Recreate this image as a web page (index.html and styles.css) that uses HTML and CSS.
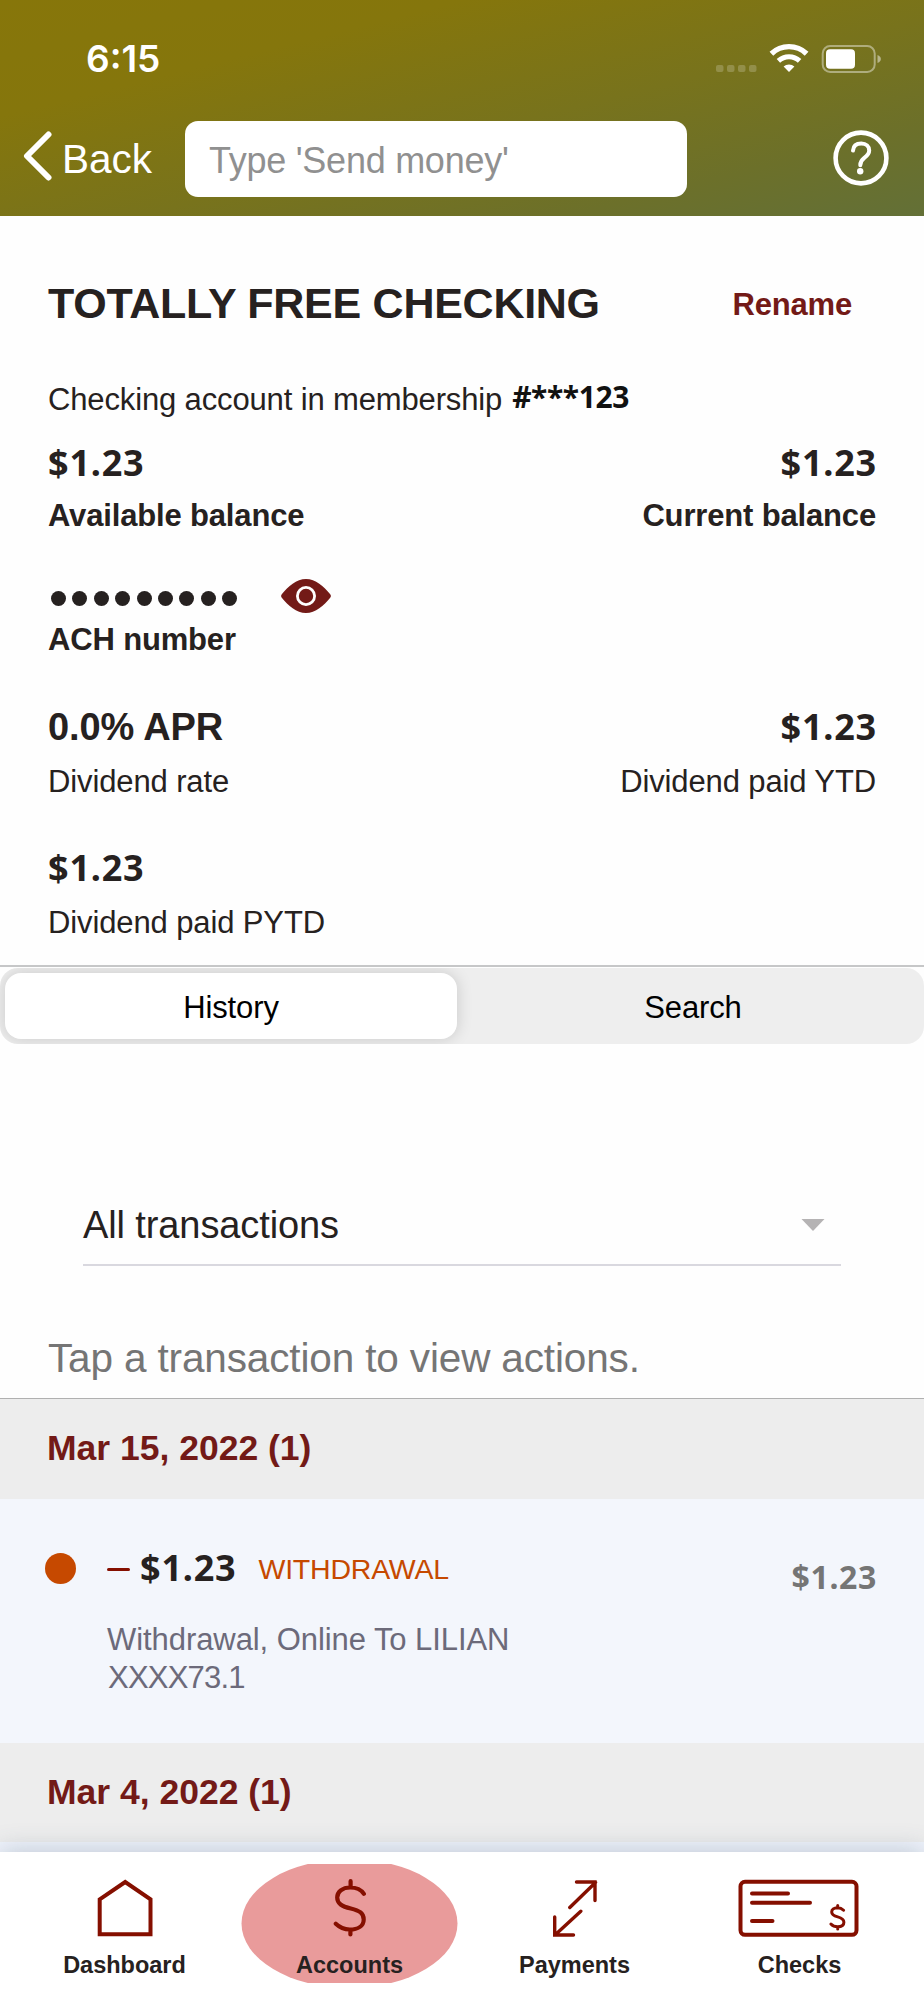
FILE: index.html
```html
<!DOCTYPE html>
<html lang="en">
<head>
<meta charset="utf-8">
<title>Totally Free Checking</title>
<link rel="stylesheet" href="styles.css">
</head>
<body>
<div class="screen">
  <header class="header">
    <div class="status">
      <span class="time">6:15</span>
      <svg class="status-icons" width="168" height="32" viewBox="0 0 168 32" aria-hidden="true">
        <g fill="#fff" fill-opacity=".2">
          <rect x="2" y="23" width="7.5" height="7" rx="2"/>
          <rect x="13" y="23" width="7.5" height="7" rx="2"/>
          <rect x="24" y="23" width="7.5" height="7" rx="2"/>
          <rect x="35" y="23" width="7.5" height="7" rx="2"/>
        </g>
        <g fill="none" stroke="#fff">
          <path d="M57.4 11.7A25.5 25.5 0 0 1 92.6 11.7" stroke-width="5.4"/>
          <path d="M64.4 18.900A15.300 15.300 0 0 1 85.600 18.900" stroke-width="5"/>
        </g>
        <path d="M75 30L69.600 24.600A7.700 7.700 0 0 1 80.400 24.600Z" fill="#fff"/>
        <rect x="108.700" y="4" width="52" height="26" rx="7.500" fill="none" stroke="#fff" stroke-opacity=".42" stroke-width="2"/>
        <rect x="112" y="7.300" width="29" height="19.400" rx="4" fill="#fff"/>
        <path d="M163.500 13C168 14.500 168 19.500 163.500 21Z" fill="#fff" fill-opacity=".48"/>
      </svg>
    </div>
    <div class="toolbar">
      <a class="back">
        <svg width="32" height="52" viewBox="0 0 32 52"><path d="M25.500 4.500L4 26L25.500 47.500" fill="none" stroke="#fff" stroke-width="6" stroke-linecap="round" stroke-linejoin="round"/></svg>
        <span>Back</span>
      </a>
      <div class="search">Type 'Send money'</div>
      <svg class="help" width="56" height="56" viewBox="0 0 56 56" fill="none" stroke="#fff">
        <circle cx="28" cy="28" r="25.400" stroke-width="4.600"/>
        <path d="M20 20.600C20.300 15.900 23.600 13.600 28.300 13.600C33.200 13.600 36.200 16.600 36.200 20.500C36.200 24.200 34.100 25.800 31.300 27.900C28.400 30.100 27.300 31.500 27.300 35.200" stroke-width="4" stroke-linecap="round"/>
        <circle cx="27.200" cy="41.200" r="3.200" fill="#fff" stroke="none"/>
      </svg>
    </div>
  </header>

  <section class="account">
    <div class="title-row">
      <h1 class="title">TOTALLY FREE CHECKING</h1>
      <a class="rename">Rename</a>
    </div>
    <div class="membership"><span>Checking account in membership</span><b class="member-id">#***123</b></div>
    <div class="stats balances">
      <div><div class="value money">$1.23</div><div class="label strong">Available balance</div></div>
      <div class="end"><div class="value money">$1.23</div><div class="label strong">Current balance</div></div>
    </div>
    <div class="ach">
      <div class="dots"><i></i><i></i><i></i><i></i><i></i><i></i><i></i><i></i><i></i></div>
      <svg width="50" height="34" viewBox="0 0 50 34">
        <path d="M1 19Q-.8 17 1 15C7 7.500 15.500 0 25 0S43 7.500 49 15Q50.800 17 49 19C43 26.500 34.500 34 25 34S7 26.500 1 19Z" fill="#731a17"/>
        <circle cx="25" cy="17" r="8.600" fill="none" stroke="#fff" stroke-width="2.800"/>
      </svg>
    </div>
    <div class="label strong ach-label">ACH number</div>
    <div class="stats rates">
      <div><div class="value rate">0.0% APR</div><div class="label">Dividend rate</div></div>
      <div class="end"><div class="value money">$1.23</div><div class="label">Dividend paid YTD</div></div>
    </div>
    <div class="stats previous">
      <div><div class="value money">$1.23</div><div class="label">Dividend paid PYTD</div></div>
    </div>
  </section>

  <div class="segments">
    <div class="segment active">History</div>
    <div class="segment">Search</div>
  </div>

  <div class="filter">
    <span>All transactions</span>
    <svg width="24" height="12" viewBox="0 0 24 12"><path d="M.500 0H23.500L12 12Z" fill="#b5b3b4"/></svg>
  </div>
  <p class="hint">Tap a transaction to view actions.</p>

  <h2 class="day first">Mar 15, 2022 (1)</h2>
  <article class="transaction">
    <span class="marker"></span>
    <div class="details">
      <div class="amount-row"><span class="minus"></span><span class="money amount">$1.23</span><span class="kind">WITHDRAWAL</span></div>
      <div class="description">Withdrawal, Online To LILIAN</div>
      <div class="description code">XXXX73.1</div>
    </div>
    <span class="running">$1.23</span>
  </article>
  <h2 class="day second">Mar 4, 2022 (1)</h2>
  <div class="next"></div>

  <nav class="tabs">
    <a class="tab">
      <svg width="56" height="58" viewBox="0 0 56 58"><path d="M2.700 20.300L28.200 3L53.500 20.300V55.300H2.700Z" fill="none" stroke="#850f00" stroke-width="4"/></svg>
      <span>Dashboard</span>
    </a>
    <a class="tab">
      <svg class="glow" width="217" height="119" viewBox="0 0 217 119"><ellipse cx="108.500" cy="59.500" rx="108" ry="64.500" fill="#e99b9b"/></svg>
      <svg width="34" height="58" viewBox="0 0 34 58" fill="none" stroke="#850f00" stroke-width="4.200" stroke-linecap="round" stroke-linejoin="round"><path d="M17.600 2.200V7.500M17.400 51V55.500M30.900 14.800C28.200 10.800 23.100 8.500 17.200 8.500C9.300 8.500 4.200 12.900 4.200 18.500C4.200 24.600 8.800 27.400 17.800 29.500C26.700 31.600 30.700 34.400 30.700 40.400C30.700 46.700 25.100 50.500 16.700 50.500C11.100 50.500 6.400 48.300 2.800 44.800"/></svg>
      <span>Accounts</span>
    </a>
    <a class="tab">
      <svg width="46" height="58" viewBox="0 0 46 58" fill="none" stroke="#850f00" stroke-width="3.400" stroke-linecap="round"><path d="M17.800 28.500L43.500 3.500M24.500 3H43V21.500M28.800 32.200L3 56M2.700 38V56H21.500"/></svg>
      <span>Payments</span>
    </a>
    <a class="tab">
      <svg width="123" height="58" viewBox="0 0 123 58" fill="none" stroke="#850f00" stroke-width="4" stroke-linecap="round"><rect x="2.500" y="2.800" width="116" height="53" rx="4.500"/><path d="M14 14.500H50M14 23.800H72M14 42H34.500"/><path d="M99.700 26.500V29M99.700 48.500V50M105.600 31.200C103.800 29.400 101.600 28.800 99.300 28.800C96 28.800 93.700 30.700 93.700 33C93.700 36 96.200 37 99.700 37.900C103.600 38.900 105.900 40.200 105.900 43.300C105.900 46.300 103.300 47.800 99.600 47.800C96.800 47.800 94.600 46.900 92.900 45" stroke-width="3"/></svg>
      <span>Checks</span>
    </a>
  </nav>
</div>
</body>
</html>
```
FILE: styles.css
```css
* { box-sizing: border-box; }

body {
  margin: 0;
  font-family: "Liberation Sans", Arial, sans-serif;
  color: #262120;
  background: #fff;
}

svg { display: block; flex: none; }

.screen {
  width: 924px;
  height: 2000px;
  display: flex;
  flex-direction: column;
  overflow: hidden;
  background: #fefefe;
}

.screen > * { flex: none; }

.header {
  height: 216px;
  background: linear-gradient(166deg, #87760a 0%, #85760c 26%, #78731c 56%, #6c702a 80%, #637037 100%);
  color: #fff;
}

.status {
  display: flex;
  justify-content: space-between;
  height: 108px;
  padding: 42px 42px 0 86px;
}

.time { font: 600 37px/34px Inter, sans-serif; }

.toolbar {
  display: flex;
  align-items: flex-start;
  height: 108px;
  padding: 13px 35px 0 23px;
}

.back {
  display: flex;
  align-items: center;
  gap: 7px;
  height: 70px;
  width: 162px;
}

.back span {
  font-size: 40.5px;
  line-height: 50px;
  padding-top: 6px;
}

.search {
  width: 502px;
  height: 76px;
  border-radius: 13px;
  padding-left: 24px;
  background: #fff;
  color: #909090;
  font-size: 36px;
  line-height: 80px;
  letter-spacing: -0.26px;
}

.help { margin: 9px 0 0 auto; }

.account {
  height: 751px;
  padding: 62px 48px 0;
  border-bottom: 2px solid #c6c7c8;
}

.title-row {
  display: flex;
  justify-content: space-between;
  height: 97px;
  padding-right: 24px;
}

.title {
  margin: 0;
  font-size: 43px;
  line-height: 50px;
  letter-spacing: -0.27px;
}

.rename {
  padding-top: 2px;
  color: #731a17;
  font-size: 31px;
  font-weight: bold;
  line-height: 50px;
  letter-spacing: -0.18px;
}

.membership {
  display: flex;
  gap: 10px;
  height: 61px;
  font-size: 31px;
  line-height: 50px;
  letter-spacing: -0.14px;
}

.member-id {
  margin-top: -3px;
  font-family: "Noto Sans", sans-serif;
  font-size: 30px;
  letter-spacing: -0.4px;
  color: #111;
}

.stats {
  display: flex;
  justify-content: space-between;
}

.end { text-align: right; }
.end .money { margin-right: -1px; }

.value {
  height: 50px;
  line-height: 50px;
}

.money {
  font-family: "Noto Sans", sans-serif;
  font-size: 36px;
  font-weight: bold;
  letter-spacing: 0.8px;
}

.rate {
  font-size: 38px;
  font-weight: bold;
  letter-spacing: -0.1px;
}

.label {
  font-size: 31px;
  line-height: 50px;
  letter-spacing: -0.12px;
}

.strong { font-weight: bold; letter-spacing: -0.16px; }

.balances { margin-top: 2px; height: 142px; }
.balances .label { padding-top: 3px; }

.ach {
  display: flex;
  align-items: center;
  gap: 44px;
  height: 35px;
  margin: -2px 0 2px;
  padding-left: 3px;
}

.dots { display: flex; gap: 6.4px; padding-top: 5px; }

.dots i {
  width: 15px;
  height: 15px;
  border-radius: 50%;
  background: #262120;
}

.ach-label { height: 87px; }

.rates { height: 141px; }
.rates .label, .previous .label { padding-top: 5px; }

.segments {
  display: flex;
  height: 76px;
  margin-top: 1px;
  border-radius: 18px;
  padding: 5px;
  background: #eee;
  overflow: hidden;
}

.segment {
  width: 452px;
  height: 66px;
  border-radius: 16px;
  color: #000;
  text-align: center;
  font-size: 31px;
  line-height: 69px;
  letter-spacing: -0.12px;
}

.segment + .segment { margin-left: 10px; }

.active {
  background: #fff;
  box-shadow: 0 0 16px rgba(0, 0, 0, 0.16);
}

.filter {
  display: flex;
  justify-content: space-between;
  align-items: flex-start;
  margin: 155px 83px 0;
  height: 67px;
  border-bottom: 2px solid #d9d8df;
  padding: 1px 16px 0 0;
  font-size: 38px;
  line-height: 50px;
  letter-spacing: -0.11px;
}

.filter svg { margin-top: 19px; }

.hint {
  height: 65px;
  margin: 67px 0 0;
  padding-left: 48px;
  color: #757575;
  font-size: 40.5px;
  line-height: 50px;
  letter-spacing: -0.14px;
}

.day {
  margin: 0;
  padding-left: 47px;
  background: #ededed;
  color: #731a17;
  font-size: 35.5px;
}

.first {
  height: 101px;
  border-top: 1px solid #b0b0b0;
  line-height: 99px;
}

.second {
  height: 99px;
  line-height: 98px;
}

.transaction {
  display: flex;
  height: 244px;
  padding: 45px 48px 0 45px;
  background: #f3f6fc;
}

.marker {
  width: 31px;
  height: 31px;
  margin: 9px 31px 0 0;
  border-radius: 50%;
  background: #c64900;
}

.amount-row {
  display: flex;
  height: 77px;
  line-height: 50px;
}

.minus {
  width: 23px;
  height: 3px;
  border-radius: 2px;
  margin: 24px 10px 0 0;
  background: #850f00;
}

.amount { margin-top: -1px; }

.kind {
  margin-left: 22px;
  color: #c64900;
  font-size: 28.5px;
  letter-spacing: -0.22px;
}

.description {
  color: #6c6a7a;
  font-size: 31px;
  line-height: 38px;
  letter-spacing: -0.07px;
}

.code { padding-left: 1px; letter-spacing: -0.8px; }

.running {
  margin: 8px -1px 0 auto;
  color: #757575;
  font: bold 32px/50px "Noto Sans", sans-serif;
  letter-spacing: 0.65px;
}

.next { height: 10px; background: #f0f4fc; }

.tabs {
  display: flex;
  height: 149px;
  padding: 27px 12px 0;
  background: #fff;
  box-shadow: 0 -2px 24px rgba(70, 90, 110, 0.28);
}

.tab {
  position: relative;
  flex: 1;
  display: flex;
  flex-direction: column;
  align-items: center;
  gap: 11px;
  color: #262120;
  font-size: 23.5px;
  font-weight: bold;
  line-height: 34px;
}

.tab > * { position: relative; }
.tab > .glow { position: absolute; top: -15px; left: 4px; }
```
